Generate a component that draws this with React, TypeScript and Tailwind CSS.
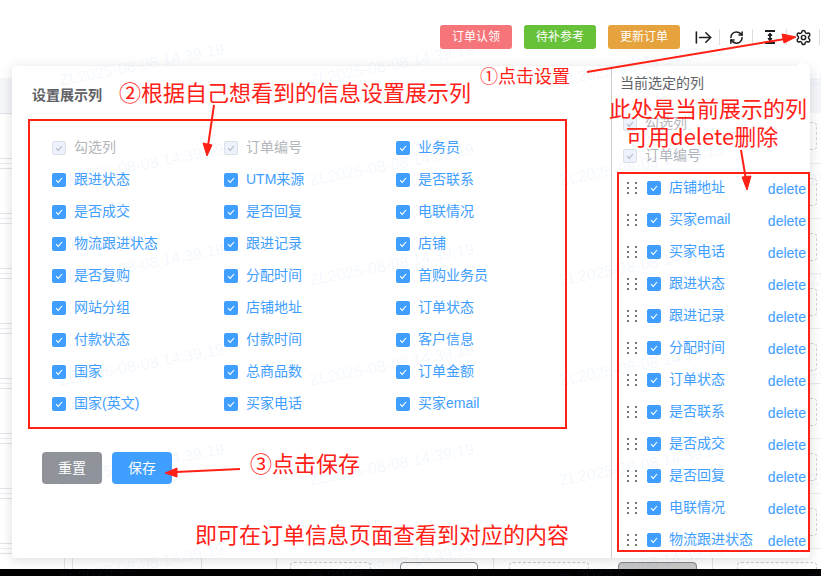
import { ArrowRightFromLine, RefreshCw, Settings } from 'lucide-react';

const uiFont = 'font-["Liberation_Sans","Noto_Sans_CJK_SC",sans-serif]';
const noteFont = 'font-["Noto_Sans_CJK_SC","Liberation_Sans",sans-serif]';

const allColumns = [
  '勾选列', '订单编号', '业务员',
  '跟进状态', 'UTM来源', '是否联系',
  '是否成交', '是否回复', '电联情况',
  '物流跟进状态', '跟进记录', '店铺',
  '是否复购', '分配时间', '首购业务员',
  '网站分组', '店铺地址', '订单状态',
  '付款状态', '付款时间', '客户信息',
  '国家', '总商品数', '订单金额',
  '国家(英文)', '买家电话', '买家email',
];

const lockedColumns = ['勾选列', '订单编号'];

const currentColumns = [
  '店铺地址', '买家email', '买家电话', '跟进状态', '跟进记录', '分配时间',
  '订单状态', '是否联系', '是否成交', '是否回复', '电联情况', '物流跟进状态',
];

function Checkbox({ disabled }: { disabled?: boolean }) {
  return (
    <span
      className={
        disabled
          ? 'flex h-[14px] w-[14px] shrink-0 items-center justify-center rounded-[2px] border border-[#dcdfe6] bg-[#edf2fc]'
          : 'flex h-[14px] w-[14px] shrink-0 items-center justify-center rounded-[2px] bg-[#409eff]'
      }
    >
      <svg width="10" height="10" viewBox="0 0 10 10" fill="none">
        <path d="M2 5.2 4.2 7.4 8 3" stroke={disabled ? '#b4b8c0' : '#ffffff'} strokeWidth="1.1" />
      </svg>
    </span>
  );
}

function ColumnOption({ label }: { label: string }) {
  const disabled = lockedColumns.includes(label);
  return (
    <div className="flex h-[32px] items-center gap-2">
      <Checkbox disabled={disabled} />
      <span className={disabled ? '-translate-y-px text-sm text-[#b4b6bb]' : '-translate-y-px text-sm text-[#409eff]'}>
        {label}
      </span>
    </div>
  );
}

function DragDots() {
  return (
    <svg width="10" height="14" viewBox="0 0 10 14" className="shrink-0" fill="#777777">
      <rect x="0" y="1" width="2" height="2" />
      <rect x="8" y="1" width="2" height="2" />
      <rect x="0" y="6" width="2" height="2" />
      <rect x="8" y="6" width="2" height="2" />
      <rect x="0" y="11" width="2" height="2" />
      <rect x="8" y="11" width="2" height="2" />
    </svg>
  );
}

function TableRow() {
  return (
    <div className="flex h-[55px]">
      <div className="flex w-[40px] flex-col gap-[4px]">
        <div className="h-px bg-[#e2e2e8]" />
        <div className="h-px bg-[#ececf2]" />
        <div className="h-px bg-[#e2e2e8]" />
      </div>
      <div className="flex flex-1 flex-col pt-[5px]">
        <div className="h-px bg-[#eeeeee]" />
        <div className="mr-[4px] ml-auto mt-[14px] h-[28px] w-[80px] rounded border border-dashed border-[#d6d6d6]" />
      </div>
    </div>
  );
}

function Toolbar() {
  return (
    <div className="flex h-[66px] items-start justify-end pt-[25px] pr-px">
      <div className="flex gap-3 text-xs text-white">
        <button className="h-6 w-[72px] rounded-[3px] bg-[#f6757a]">订单认领</button>
        <button className="h-6 w-[72px] rounded-[3px] bg-[#67c23a]">待补参考</button>
        <button className="h-6 w-[72px] rounded-[3px] bg-[#e6a23c]">更新订单</button>
      </div>
      <div className="ml-[7px] mt-[4px] flex text-[#1f1f1f]">
        <div className="flex h-[16px] w-[33px] items-center justify-center border-r border-[#dddddd]">
          <ArrowRightFromLine size={19} strokeWidth={2} />
        </div>
        <div className="flex h-[16px] w-[33px] items-center justify-center border-r border-[#dddddd]">
          <RefreshCw size={15} strokeWidth={2.4} />
        </div>
        <div className="flex h-[16px] w-[34px] items-center justify-center border-r border-[#dddddd]">
          <svg width="10" height="14" viewBox="0 0 10 14" fill="none" stroke="currentColor">
            <path d="M0 1h10M0 13h10" strokeWidth="1.8" />
            <path d="M5 4v6" strokeWidth="1.8" />
            <path d="M3 5.5 5 3 7 5.5ZM3 8.5 5 11 7 8.5Z" fill="currentColor" strokeWidth="1" />
          </svg>
        </div>
        <div className="flex h-[16px] w-[33px] items-center justify-center border-r border-[#dddddd]">
          <Settings size={17} strokeWidth={2.1} />
        </div>
      </div>
    </div>
  );
}

function BackgroundTable() {
  return (
    <div className="mt-[12px] h-[480px] overflow-hidden">
      <div className="h-[35px] bg-[#f5f6f9]" />
      <div className="flex h-[45px]">
        <div className="h-px w-[40px] bg-[#e2e2e8]" />
        <div className="mr-[4px] ml-auto mt-[9px] h-[28px] w-[80px] rounded border border-dashed border-[#d6d6d6]" />
      </div>
      {[0, 1, 2, 3, 4, 5, 6, 7].map((i) => (
        <TableRow key={i} />
      ))}
    </div>
  );
}

function BottomStrip() {
  return (
    <div className="flex h-[11px] overflow-hidden pr-[4px]">
      <div className="w-[64px]" />
      <div className="w-[8px] border-l border-[#e2e2e8]" />
      <div className="w-[129px] border-l border-[#e2e2e8]" />
      <div className="w-[75px] border-l border-[#e2e2e8]" />
      <div className="w-[108px] border-l border-[#e2e2e8] pl-[13px] pt-[4px]">
        <div className="h-[28px] w-[81px] rounded border border-dashed border-[#cccccc]" />
      </div>
      <div className="w-[109px] pl-[16px] pt-[4px]">
        <div className="h-[28px] w-[78px] rounded border border-[#888888] bg-white" />
      </div>
      <div className="flex w-[219px] border-l border-[#e2e2e8] pl-[15px] pt-[4px]">
        <div className="h-[28px] w-[80px] rounded border border-dashed border-[#cccccc]" />
        <div className="ml-[29px] h-[28px] w-[79px] rounded border border-[#888888] bg-[#c8c8c8]" />
      </div>
      <div className="flex-1 border-l border-[#e2e2e8] pl-[24px] pt-[4px]">
        <div className="h-[28px] w-[80px] rounded border border-dashed border-[#cccccc]" />
      </div>
    </div>
  );
}

function ColumnPopover() {
  return (
    <div className="absolute left-[12px] top-[66px] flex h-[492px] w-[798px] rounded-[4px] bg-white shadow-[0_2px_12px_rgba(0,0,0,0.14)]">
      <div className="absolute right-[3px] top-[-4px] h-[9px] w-[9px] rotate-45 bg-white" />

      <div className="w-[599px] pl-[16px] pt-[20px]">
        <div className="pl-[4px] text-[14px] leading-[18px] font-bold text-[#606266]">设置展示列</div>
        <div className="mt-[15px] h-[310px] w-[539px] border-2 border-[#ff2016] pl-[22px] pt-[11px]">
          <div className="grid grid-cols-[repeat(3,172px)]">
            {allColumns.map((label) => (
              <ColumnOption key={label} label={label} />
            ))}
          </div>
        </div>
        <div className="ml-[14px] mt-[23px] flex gap-[10px] text-sm text-white">
          <button className="h-[32px] w-[60px] rounded-[4px] bg-[#909399]">重置</button>
          <button className="h-[32px] w-[60px] rounded-[4px] bg-[#409eff]">保存</button>
        </div>
      </div>

      <div className="flex-1 border-l border-[#cfcfcf] pt-[8px]">
        <div className="pl-[8px] text-[14px] leading-[18px] text-[#606266]">当前选定的列</div>
        <div className="mt-[16px] pl-[11px]">
          {lockedColumns.map((label) => (
            <ColumnOption key={label} label={label} />
          ))}
        </div>
        <div className="pl-[15px] pr-[4px]">
          {currentColumns.map((label) => (
            <div key={label} className="flex h-[32px] items-center">
              <DragDots />
              <span className="ml-[10px]">
                <Checkbox />
              </span>
              <span className="ml-2 -translate-y-px text-sm text-[#409eff]">{label}</span>
              <span className="ml-auto translate-y-px text-sm text-[#409eff]">delete</span>
            </div>
          ))}
        </div>
      </div>
    </div>
  );
}

function Annotations() {
  return (
    <div className={`pointer-events-none absolute inset-0 text-[#ff2016] ${noteFont}`}>
      <div className="absolute left-[617px] top-[172px] h-[380px] w-[193px] border-2 border-[#ff2016]" />
      <span className="absolute left-[480px] top-[62px] text-[18px] leading-[26px]">①点击设置</span>
      <span className="absolute left-[119px] top-[76px] text-[22px] leading-[30px]">②根据自己想看到的信息设置展示列</span>
      <span className="absolute left-[609px] top-[92px] text-[22px] leading-[30px]">此处是当前展示的列</span>
      <span className="absolute left-[626px] top-[120px] text-[22px] leading-[30px]">可用delete删除</span>
      <span className="absolute left-[250px] top-[447px] text-[22px] leading-[30px]">③点击保存</span>
      <span className="absolute left-[195px] top-[518px] text-[22px] leading-[30px]">即可在订单信息页面查看到对应的内容</span>
      <svg width="821" height="576" className="absolute left-0 top-0" fill="#ff2016" stroke="#ff2016">
        <path d="M587 72 785 39" strokeWidth="2" />
        <path d="M796 37 782 34 784 43Z" />
        <path d="M214 105 208 146" strokeWidth="2" />
        <path d="M207 156 203 143 212 145Z" />
        <path d="M240 469 176 472" strokeWidth="2" />
        <path d="M165 473 177 468 177 477Z" />
        <path d="M741 150 746 180" strokeWidth="2" />
        <path d="M747 190 742 177 751 176Z" />
      </svg>
    </div>
  );
}

function Watermarks() {
  const cells = Array.from({ length: 24 }, (_, i) => i);
  return (
    <div className="pointer-events-none absolute inset-0 grid auto-rows-[100px] grid-cols-[repeat(4,250px)] overflow-hidden pl-[58px] pt-[15px]">
      {cells.map((i) => (
        <div key={i} className="flex items-center">
          <span className="-rotate-[11deg] whitespace-nowrap font-['Liberation_Sans',sans-serif] text-[16px] text-[#409eff]/8">
            ZL2025-08-08 14:39:19
          </span>
        </div>
      ))}
    </div>
  );
}

export default function App() {
  return (
    <div className={`relative flex h-[576px] w-[821px] flex-col overflow-hidden bg-white ${uiFont}`}>
      <Toolbar />
      <BackgroundTable />
      <BottomStrip />
      <div className="h-[7px] bg-black" />
      <ColumnPopover />
      <Watermarks />
      <Annotations />
    </div>
  );
}
